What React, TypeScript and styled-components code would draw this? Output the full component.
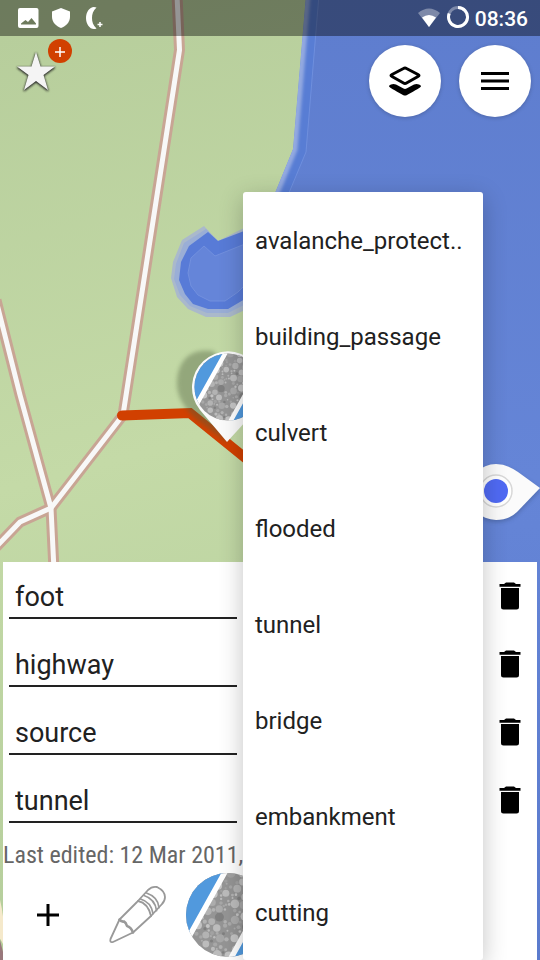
import React, { useState } from "react";
import styled, { createGlobalStyle } from "styled-components";

const GlobalStyle = createGlobalStyle`
  * { box-sizing: border-box; }
  body { margin: 0; font-family: Roboto, "Noto Sans", sans-serif; color: #212121; }
  button { border: 0; padding: 0; background: none; font: inherit; color: inherit; cursor: pointer; }
`;

const Screen = styled.main`
  position: relative;
  display: flex;
  flex-direction: column;
  min-height: 100vh;
  overflow: hidden;
  background: #bcd29f;
`;

const MapCanvas = styled.svg`
  position: absolute;
  inset: 0;
  width: 100%;
  height: 100%;
`;

const StatusBar = styled.header`
  position: relative;
  display: flex;
  align-items: center;
  justify-content: space-between;
  height: 36px;
  padding: 0 12px 0 16px;
  background: rgba(0, 0, 0, 0.4);
  color: #fff;
`;

const StatusGroup = styled.div<{ $gap: number }>`
  display: flex;
  align-items: center;
  gap: ${(p) => p.$gap}px;
`;

const Clock = styled.time`
  font-size: 21px;
  line-height: 36px;
  font-weight: 500;
  padding-top: 2px;
`;

const MapControls = styled.div`
  position: relative;
  display: flex;
  justify-content: space-between;
  align-items: flex-start;
  padding: 9px 9px 0 12px;
`;

const QuestButton = styled.button`
  position: relative;
  width: 60px;
  height: 60px;
  margin-top: -6px;
`;

const QuestBadge = styled.span`
  position: absolute;
  top: 0;
  right: 0;
  display: grid;
  place-items: center;
  width: 24px;
  height: 24px;
  padding-top: 2px;
  border-radius: 50%;
  background: #d14000;
  color: #fff;
`;

const ButtonGroup = styled.div`
  display: flex;
  gap: 18px;
`;

const RoundButton = styled.button`
  display: grid;
  place-items: center;
  width: 72px;
  height: 72px;
  border-radius: 50%;
  background: #fff;
  box-shadow: 0 1px 4px rgba(0, 0, 0, 0.2);
`;

const Editor = styled.form`
  position: relative;
  margin: auto 3px 0;
  background: #fff;
`;

const TagRow = styled.div`
  display: grid;
  grid-template-columns: 1fr 1fr 54px;
  height: 68px;
`;

const TagInput = styled.input`
  min-width: 0;
  height: 50px;
  margin: 7px 6px 0;
  padding: 8px 6px 0;
  border: 0;
  border-bottom: 2px solid #222;
  border-radius: 0;
  outline: 0;
  background: transparent;
  color: #212121;
  font: 400 27px/32px Roboto, "Noto Sans", sans-serif;
`;

const DeleteButton = styled.button`
  display: grid;
  place-items: center;
`;

const LastEdited = styled.p`
  margin: 4px 0 0;
  font: 400 24px/34px "Roboto Condensed", "Liberation Sans Narrow", sans-serif;
  color: #666;
  white-space: nowrap;
`;

const Toolbar = styled.div`
  display: flex;
  height: 88px;
`;

const ToolButton = styled.button`
  display: grid;
  place-items: center;
  width: 90px;
  height: 86px;
  color: #000;
`;

const Suggestions = styled.ul`
  position: absolute;
  top: 192px;
  bottom: 0;
  left: 45%;
  right: 57px;
  margin: 0;
  padding: 0;
  list-style: none;
  background: #fff;
  border-radius: 3px;
  box-shadow: 0 6px 24px rgba(0, 0, 0, 0.24);
`;

const SuggestionButton = styled.button`
  display: block;
  width: 100%;
  height: 96px;
  padding: 2px 12px 0;
  text-align: left;
  font-size: 24px;
  line-height: 28px;
  white-space: nowrap;
`;

type Stone = { x: number; y: number; r: number; fill: string };

function makeStones(): Stone[] {
  let seed = 17;
  const next = () => {
    seed = (seed * 16807) % 2147483647;
    return seed / 2147483647;
  };
  const shades = ["#b3b3b3", "#a8a8a8", "#c4c4c4", "#808080", "#acacac", "#bcbcbc", "#a2a2a2"];
  const stones: Stone[] = [];
  for (let i = 0; i < 1600 && stones.length < 170; i++) {
    const size = stones.length < 50 ? 3.4 + next() * 1.4 : 1 + next() * 1.2;
    const stone = { x: next() * 84 - 42, y: next() * 84 - 42, r: size, fill: shades[Math.floor(next() * 7)] };
    const clear = stones.every((s) => Math.hypot(s.x - stone.x, s.y - stone.y) > s.r + stone.r);
    if (clear) stones.push(stone);
  }
  return stones;
}

const STONES = makeStones();

function PathBadge({ id }: { id: string }) {
  return (
    <g>
      <clipPath id={id}>
        <circle r="42" />
      </clipPath>
      <g clipPath={`url(#${id})`}>
        <rect x="-42" y="-42" width="84" height="84" fill="#959595" />
        {STONES.map((s, i) => (
          <circle key={i} cx={s.x} cy={s.y} r={s.r} fill={s.fill} />
        ))}
        <path d="M-4-43-38 18-51 43-60-43zM4 43 38-18 51-43 60 43z" fill="#5199dd" />
        <path d="M-3-43-37 18-51 43M3 43 37-18 51-43" fill="none" stroke="#fff" strokeWidth="5.5" />
      </g>
    </g>
  );
}

function MapView() {
  const roads = [
    "M177-5 179.500 50 123 415 51 508 20 522-4 547",
    "M-4 300 20 395 51 508 54 570",
  ];
  return (
    <MapCanvas viewBox="0 0 540 960" preserveAspectRatio="xMidYMid slice" aria-hidden="true">
      <defs>
        <linearGradient id="land" x1="0" y1="0" x2="0.15" y2="1">
          <stop offset="0" stopColor="#b6cd9b" />
          <stop offset="0.5" stopColor="#c4daa7" />
          <stop offset="1" stopColor="#b4cd9b" />
        </linearGradient>
        <linearGradient id="water" x1="0" y1="0" x2="0" y2="1">
          <stop offset="0" stopColor="#5e7dce" />
          <stop offset="0.5" stopColor="#6585d7" />
          <stop offset="1" stopColor="#5b7bcd" />
        </linearGradient>
        <linearGradient id="shore" x1="293" x2="308" y1="0" y2="0" gradientUnits="userSpaceOnUse">
          <stop offset="0" stopColor="#8ba2dc" />
          <stop offset="1" stopColor="#5a7ed4" />
        </linearGradient>
        <filter id="soft" x="-30%" y="-30%" width="160%" height="160%">
          <feGaussianBlur stdDeviation="2" />
        </filter>
        <filter id="haze" x="-30%" y="-30%" width="160%" height="160%">
          <feGaussianBlur stdDeviation="1.6" />
        </filter>
        <clipPath id="sea">
          <path d="M306-5 293 149 268 210V960H545V-5z" />
        </clipPath>
      </defs>
      <rect width="540" height="960" fill="url(#land)" />
      <g clipPath="url(#sea)">
        <path d="M306-5 293 149 268 210V960H545V-5z" fill="#587dd4" />
        <path d="M306-5 293 149 268 210" fill="none" stroke="#93a9e0" strokeWidth="9" filter="url(#haze)" />
        <path d="M319-5 306 152 281 212V960H545V-5z" fill="url(#water)" />
        <path d="M319-5 306 152 281 212" fill="none" stroke="#6f8fdd" />
      </g>
      <path d="M204 226 182 240 173 262 171 278 177 297 188 309 206 317H230L260 303V220L218 241z" fill="#aab9cb" />
      <path d="M206 229 184 243 176 264 174 279 180 295 190 306 207 313H228L260 297V225L218 241z" fill="#9aaed6" />
      <path d="M208 232 189 246 181 262 179 280 185 294 193 304 208 309H228L260 290V225L218 241z" fill="#587bd7" />
      <path d="M204 246 191 258 188 273 191 286 198 295 210 301H225L238 292 260 270V238L215 256z" fill="#6585d9" stroke="#7290de" />
      <path d="M-2 892Q6 920 3 944L-2 935z" fill="#f5e9cb" />
      <path d="M-2 932 6 964H-2z" fill="#99787c" />
      {roads.map((d) => (
        <path key={d} d={d} fill="none" stroke="#c8a594" strokeWidth="11" strokeLinejoin="round" />
      ))}
      {roads.map((d) => (
        <path key={d} d={d} fill="none" stroke="#f8f8f8" strokeWidth="5" strokeLinejoin="round" />
      ))}
      <path d="M122 415.500 190 413 265 474" fill="none" stroke="#d14000" strokeWidth="10" strokeLinecap="round" />
      <path d="M213 351C189 347 176 363 177 386C179 410 202 424 227 442L250 390z" fill="#4f5f3d" opacity="0.4" filter="url(#soft)" />
      <path d="M227 442 200 410A36 36 0 1 1 256 410z" fill="#fbfbfb" />
      <g transform="translate(228 387) scale(.8)">
        <PathBadge id="pin-clip" />
      </g>
      <path d="M540 488 518 472Q507 464 496 464A28 28 0 0 0 496 520Q509 520 517 512z" fill="#30466f" opacity="0.4" filter="url(#soft)" transform="translate(0 2)" />
      <path d="M540 488 518 472Q507 464 496 464A28 28 0 0 0 496 520Q509 520 517 512z" fill="#fbfbfb" />
      <circle cx="496" cy="491" r="16" fill="#fff" stroke="#d8d8d8" strokeWidth="1.500" />
      <circle cx="496" cy="491" r="12" fill="#506af3" />
    </MapCanvas>
  );
}

const PictureIcon = () => (
  <svg width="24" height="24" viewBox="0 0 24 24" aria-hidden="true">
    <path fillRule="evenodd" d="M4 2H20.500Q22.500 2 22.500 4V20Q22.500 22 20.500 22H4Q2 22 2 20V4Q2 2 4 2zM5 18.500H20V17.500L15.500 12 12 16 9.500 14 5 17.500z" fill="#fff" />
  </svg>
);

const ShieldIcon = () => (
  <svg width="24" height="24" viewBox="0 0 24 24" aria-hidden="true">
    <path d="M12 2 21 5.500V11C21 16 17 20 12 22 7 20 3 16 3 11V5.500z" fill="#fff" />
  </svg>
);

const MoonIcon = () => (
  <svg width="24" height="24" viewBox="0 0 24 24" aria-hidden="true">
    <path d="M14.500 1.500C9-1 4 5 4 12S9 25 14.500 22.500C11 19 10 16 10 12S11 5 14.500 1.500z" fill="#fff" />
    <path d="M18 16v5M15.500 18.500h5" stroke="#fff" strokeWidth="1.500" />
  </svg>
);

const WifiIcon = () => (
  <svg width="24" height="24" viewBox="0 0 24 24" aria-hidden="true">
    <path d="M12 21 1 7Q12-2 23 7z" fill="#fff" opacity="0.35" />
    <path d="M12 21 5 11.500Q12 6.500 19 11.500z" fill="#fff" />
  </svg>
);

const BatteryIcon = () => (
  <svg width="24" height="24" viewBox="0 0 24 24" aria-hidden="true">
    <circle cx="12" cy="11" r="9.500" fill="none" stroke="#fff" strokeOpacity="0.35" strokeWidth="3" />
    <path d="M12 1.500A9.500 9.500 0 1 1 3.200 7.500" fill="none" stroke="#fff" strokeWidth="3" />
  </svg>
);

const StarIcon = () => (
  <svg width="60" height="60" viewBox="0 0 60 60" aria-hidden="true">
    <defs>
      <filter id="star-shadow" x="-30%" y="-30%" width="160%" height="160%">
        <feGaussianBlur stdDeviation="1.300" />
      </filter>
    </defs>
    <path d="M24 13 28.500 27.500H43L31.500 36 36 51 24 42 12 51 16.500 36 5 27.500H19.500z" fill="#222" stroke="#222" filter="url(#star-shadow)" transform="translate(0 1)" />
    <path d="M24 13 28.500 27.500H43L31.500 36 36 51 24 42 12 51 16.500 36 5 27.500H19.500z" fill="#f4f4f4" />
  </svg>
);

const PlusIcon = ({ size, stroke }: { size: number; stroke: number }) => (
  <svg width={size} height={size} viewBox={`0 0 ${size} ${size}`} aria-hidden="true">
    <path d={`M${size / 2} 0V${size}M0 ${size / 2}H${size}`} stroke="currentColor" strokeWidth={stroke} />
  </svg>
);

const LayersIcon = () => (
  <svg width="36" height="36" viewBox="0 0 36 36" aria-hidden="true">
    <path d="M16.500 5.500Q18 4.500 19.500 5.500L31 11.500Q33 12.500 31 13.500L19.500 20Q18 21 16.500 20L5 13.500Q3 12.500 5 11.500z" fill="none" stroke="#000" strokeWidth="3" strokeLinejoin="round" />
    <path d="M2 23.500Q2 22 4 21.500 6.500 20.500 9 21.500L16.500 25.500Q18 26.300 19.500 25.500L27 21.500Q29.500 20.500 32 21.500 34 22 34 23.500 33.500 24.500 20 32 18 33 16 32 2.500 24.500 2 23.500z" fill="#000" />
  </svg>
);

const MenuIcon = () => (
  <svg width="28" height="20" viewBox="0 0 28 20" aria-hidden="true">
    <path d="M0 2.500H28M0 10H28M0 17.500H28" stroke="#000" strokeWidth="3" />
  </svg>
);

const TrashIcon = () => (
  <svg width="22" height="28" viewBox="0 0 22 28" aria-hidden="true">
    <path d="M5 2 7 .500H15L17 2H21.500V4.700H.500V2zM2 6H20V25Q20 27.500 17.500 27.500H4.500Q2 27.500 2 25z" fill="#000" />
  </svg>
);

const PencilIcon = () => (
  <svg width="60" height="60" viewBox="0 0 60 60" aria-hidden="true">
    <g fill="none" stroke="#999" strokeWidth="1.800" strokeLinejoin="round" strokeLinecap="round">
      <path d="M2.500 54 11.500 34.500 29 17 40 5Q44 1 49 2 57 6 57 12 57 16 54 19L43 31 25 47.500 5 57Q1.500 58 2.500 54z" />
      <path d="M11.500 34.500Q13 37 16 36.500 18 37.500 19 41 23 42 25 47.500" strokeWidth="2.600" />
      <path d="M30 16Q40 18 43 31M32.500 14Q43 17 45 28.500M36 10.500Q47 14 48.500 25.500M38.500 8Q50 12 51 22.500" />
    </g>
  </svg>
);

const SUGGESTIONS = [
  "avalanche_protect..",
  "building_passage",
  "culvert",
  "flooded",
  "tunnel",
  "bridge",
  "embankment",
  "cutting",
];

export default function App() {
  const [keys, setKeys] = useState(["foot", "highway", "source", "tunnel"]);
  const [values, setValues] = useState<string[]>(["", "", "", ""]);
  const replaceAt = (list: string[], index: number, text: string) =>
    list.map((entry, i) => (i === index ? text : entry));

  return (
    <Screen>
      <GlobalStyle />
      <MapView />
      <StatusBar>
        <StatusGroup $gap={9}>
          <PictureIcon />
          <ShieldIcon />
          <MoonIcon />
        </StatusGroup>
        <StatusGroup $gap={5}>
          <WifiIcon />
          <BatteryIcon />
          <Clock>08:36</Clock>
        </StatusGroup>
      </StatusBar>
      <MapControls>
        <QuestButton type="button" aria-label="Solved quests">
          <StarIcon />
          <QuestBadge>
            <PlusIcon size={10} stroke={1.5} />
          </QuestBadge>
        </QuestButton>
        <ButtonGroup>
          <RoundButton type="button" aria-label="Overlays">
            <LayersIcon />
          </RoundButton>
          <RoundButton type="button" aria-label="Main menu">
            <MenuIcon />
          </RoundButton>
        </ButtonGroup>
      </MapControls>
      <Editor onSubmit={(e) => e.preventDefault()}>
        {keys.map((key, i) => (
          <TagRow key={i}>
            <TagInput
              aria-label="Tag key"
              value={key}
              onChange={(e) => setKeys(replaceAt(keys, i, e.target.value))}
            />
            <TagInput
              aria-label="Tag value"
              value={values[i]}
              onChange={(e) => setValues(replaceAt(values, i, e.target.value))}
            />
            <DeleteButton type="button" aria-label="Delete tag">
              <TrashIcon />
            </DeleteButton>
          </TagRow>
        ))}
        <LastEdited>Last edited: 12 Mar 2011,</LastEdited>
        <Toolbar>
          <ToolButton type="button" aria-label="Add tag">
            <PlusIcon size={22} stroke={3} />
          </ToolButton>
          <ToolButton type="button" aria-label="Edit">
            <PencilIcon />
          </ToolButton>
          <ToolButton type="button" aria-label="Path surface">
            <svg width="84" height="84" viewBox="-42 -42 84 84" aria-hidden="true">
              <PathBadge id="tool-clip" />
            </svg>
          </ToolButton>
        </Toolbar>
      </Editor>
      <Suggestions>
        {SUGGESTIONS.map((name) => (
          <li key={name}>
            <SuggestionButton
              type="button"
              onClick={() => setValues(replaceAt(values, 3, name))}
            >
              {name}
            </SuggestionButton>
          </li>
        ))}
      </Suggestions>
    </Screen>
  );
}
